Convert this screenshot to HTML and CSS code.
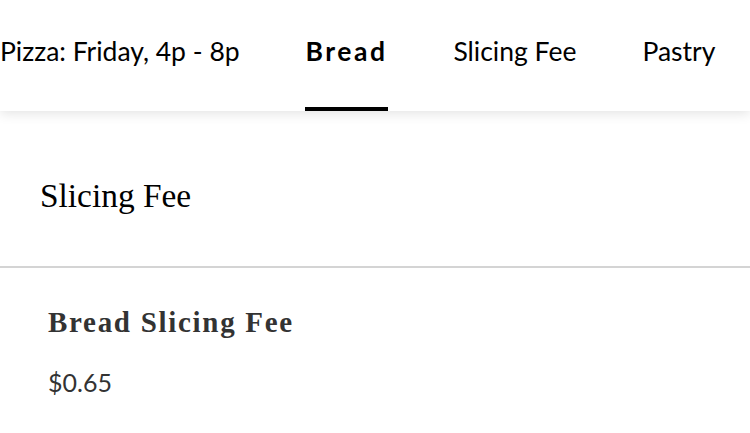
FILE: index.html
```html
<!DOCTYPE html>
<html lang="en">

<head>
  <meta charset="UTF-8">
  <meta name="viewport" content="width=device-width, initial-scale=1.0">
  <title>Menu</title>
  <link rel="stylesheet" href="styles.css">
</head>

<body>
  <nav class="category-nav">
    <a href="#" class="nav-item">Pizza: Friday, 4p - 8p</a>
    <a href="#" class="nav-item active">Bread</a>
    <a href="#" class="nav-item">Slicing Fee</a>
    <a href="#" class="nav-item">Pastry</a>
  </nav>

  <section class="menu-section">
    <h2 class="section-title">Slicing Fee</h2>
    <div class="menu-item">
      <h3 class="item-name">Bread Slicing Fee</h3>
      <p class="item-price">$0.65</p>
    </div>
  </section>
</body>

</html>
```

FILE: styles.css
```css
body {
  margin: 0;
  background-color: white;
  font-family: Lato, "Open Sans", sans-serif;
  color: black;
  overflow: hidden;
}

.category-nav {
  display: flex;
  align-items: stretch;
  height: 111px;
  gap: 66px;
  padding-left: 0;
  box-shadow: 0 2px 12px rgba(0, 0, 0, 0.12);
  position: relative;
  white-space: nowrap;
}

.nav-item {
  display: flex;
  align-items: center;
  font-size: 26.5px;
  color: black;
  text-decoration: none;
  border-bottom: 4px solid transparent;
  padding-bottom: 6px;
}

.nav-item.active {
  font-weight: bold;
  letter-spacing: 2.5px;
  border-bottom-color: black;
  padding: 0 1px 6px;
  margin: 0 -1px;
}

.section-title {
  margin: 0;
  padding: 66px 40px 51px;
  font-family: "Liberation Serif", serif;
  font-weight: normal;
  font-size: 33.4px;
  line-height: 38px;
  border-bottom: 2px solid #d4d4d4;
}

.menu-item {
  padding: 37px 48px;
  color: #333;
}

.item-name {
  margin: 0;
  font-family: "Liberation Serif", serif;
  font-size: 29px;
  line-height: 34px;
  letter-spacing: 1.7px;
}

.item-price {
  margin: 28px 0 0;
  font-size: 25px;
}
```
